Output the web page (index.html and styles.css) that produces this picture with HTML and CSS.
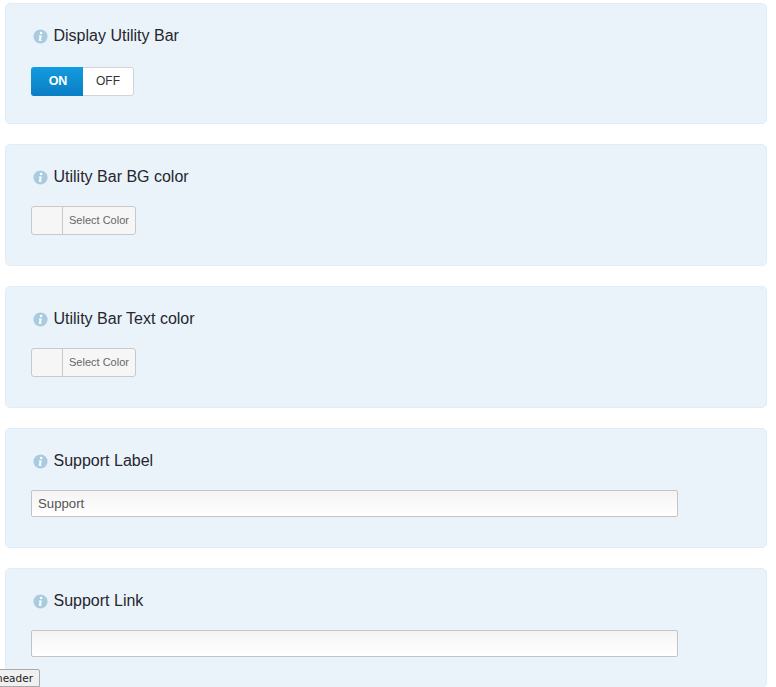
FILE: index.html
```html
<html>
  <head>
    <title>Utility Bar Settings</title>
    <link rel="stylesheet" href="styles.css">
  </head>
  <body>
    <svg class="icon-defs" width="0" height="0">
      <symbol id="info" viewBox="0 0 16 16">
        <circle cx="8" cy="8" r="7.5" fill="#a9cbe0"></circle>
        <circle cx="8.6" cy="4.3" r="1.4" fill="#fff"></circle>
        <path d="M6.3 7h3.2l-1.1 4.6h1.1l-.2.9H6l1.1-4.6H6.1z" fill="#fff"></path>
      </symbol>
    </svg>

    <section class="panel panel-short">
      <h3 class="panel-title panel-title-toggle">
        <svg class="info-icon"><use href="#info"></use></svg>
        Display Utility Bar
      </h3>
      <div class="toggle">
        <span class="toggle-on">ON</span>
        <span class="toggle-off">OFF</span>
      </div>
    </section>

    <section class="panel">
      <h3 class="panel-title">
        <svg class="info-icon"><use href="#info"></use></svg>
        Utility Bar BG color
      </h3>
      <div class="color-picker">
        <span class="color-swatch"></span>
        <span class="color-label">Select Color</span>
      </div>
    </section>

    <section class="panel">
      <h3 class="panel-title">
        <svg class="info-icon"><use href="#info"></use></svg>
        Utility Bar Text color
      </h3>
      <div class="color-picker">
        <span class="color-swatch"></span>
        <span class="color-label">Select Color</span>
      </div>
    </section>

    <section class="panel panel-input">
      <h3 class="panel-title">
        <svg class="info-icon"><use href="#info"></use></svg>
        Support Label
      </h3>
      <input class="text-input" type="text" value="Support">
    </section>

    <section class="panel panel-input">
      <h3 class="panel-title">
        <svg class="info-icon"><use href="#info"></use></svg>
        Support Link
      </h3>
      <input class="text-input" type="text">
    </section>

    <button class="header-button">header</button>
  </body>
</html>
```

FILE: styles.css
```css
:root {
  --fonts: "Liberation Sans", Arial, sans-serif;
  --panel-background: #eaf3fa;
  --panel-border: #e0edf8;
  --title-color: #26262e;
}

html {
  overflow: hidden;
  height: 100%;
}

body {
  margin: 0;
  padding: 3px 9px 0 5px;
  height: 100%;
  box-sizing: border-box;
  overflow: hidden;
  font-family: var(--fonts);
  background: #fff;
}

.icon-defs {
  display: block;
  height: 0;
}

.panel {
  box-sizing: border-box;
  height: 122px;
  margin-bottom: 20px;
  padding: 22px 25px 0;
  background: var(--panel-background);
  border: 1px solid var(--panel-border);
  border-radius: 5px;
}

.panel-short {
  height: 121px;
}

.panel-input {
  height: 120px;
}

.panel-title {
  display: flex;
  align-items: center;
  height: 20px;
  margin: 0 0 19px;
  font-size: 16px;
  font-weight: normal;
  line-height: 20px;
  color: var(--title-color);
}

.panel-title-toggle {
  margin-bottom: 21px;
}

.info-icon {
  flex: none;
  width: 15px;
  height: 15px;
  margin: 1px 5.5px 0 2px;
}

.toggle {
  display: flex;
  width: 103px;
  height: 29px;
  box-sizing: border-box;
  font-size: 12px;
  line-height: 27px;
  text-align: center;
  background: #fff;
  border: 1px solid #cfd5da;
  border-radius: 3px;
}

.toggle-on {
  width: 52px;
  margin: -1px 0 -1px -1px;
  padding-left: 2px;
  box-sizing: border-box;
  font-size: 12.5px;
  line-height: 29px;
  font-weight: bold;
  color: #fff;
  background: linear-gradient(#149be0, #0a7ec4);
  border-radius: 3px 0 0 3px;
}

.toggle-off {
  flex: 1;
  color: #333;
}

.color-picker {
  display: flex;
  width: 105px;
  height: 29px;
  box-sizing: border-box;
  background: #f6f6f6;
  border: 1px solid #c9c9c9;
  border-radius: 3px;
}

.color-swatch {
  width: 30px;
  border-right: 1px solid #c9c9c9;
}

.color-label {
  flex: 1;
  font-size: 11px;
  line-height: 26px;
  text-align: center;
  color: #666;
}

.text-input {
  display: block;
  box-sizing: border-box;
  width: 647px;
  height: 27px;
  margin: 0;
  padding: 0 6px;
  font-family: var(--fonts);
  font-size: 13.2px;
  color: #555;
  background: linear-gradient(#f4f4f4, #fff);
  border: 1px solid #c4c4c4;
  border-radius: 2px;
  outline: none;
}

.header-button {
  position: fixed;
  left: -11px;
  bottom: 0;
  height: 18px;
  padding: 0 6px;
  font-family: "DejaVu Sans", sans-serif;
  font-size: 10.5px;
  line-height: 16px;
  color: #222;
  background: #f0f0f0;
  border: 1px solid #a9a9a9;
  border-radius: 2px 2px 0 0;
}
```
